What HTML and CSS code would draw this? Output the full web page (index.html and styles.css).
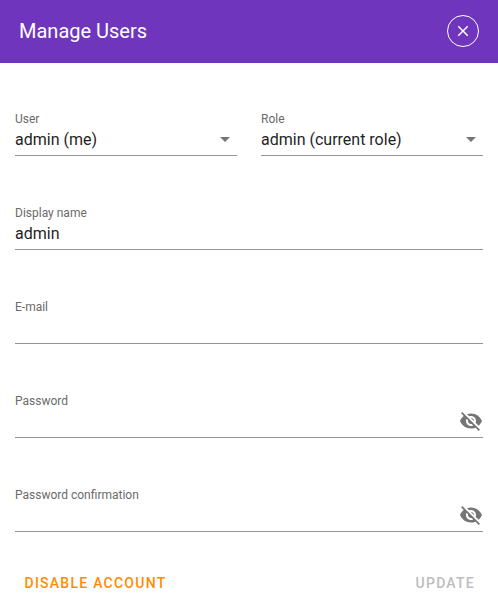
FILE: index.html
```html
<!DOCTYPE html>
<html lang="en">
<head>
<meta charset="utf-8">
<title>Manage Users</title>
<link rel="stylesheet" href="styles.css">
</head>
<body>
<main class="dialog">
  <header class="header">
    <h1 class="title">Manage Users</h1>
    <button class="close" aria-label="Close"><svg viewBox="0 0 24 24" width="18" height="18"><path d="M19 6.41L17.59 5 12 10.59 6.41 5 5 6.41 10.59 12 5 17.59 6.41 19 12 13.41 17.59 19 19 17.59 13.41 12z"/></svg></button>
  </header>
  <form class="form">
    <div class="row">
      <div class="field"><span class="label">User</span><div class="control"><span class="value">admin (me)</span><i class="arrow"></i></div></div>
      <div class="field"><span class="label">Role</span><div class="control"><span class="value">admin (current role)</span><i class="arrow"></i></div></div>
    </div>
    <div class="field"><span class="label">Display name</span><div class="control"><span class="value">admin</span></div></div>
    <div class="field"><span class="label">E-mail</span><div class="control"></div></div>
    <div class="field"><span class="label">Password</span><div class="control"><svg class="eye" viewBox="0 0 24 24"><path d="M12 7c2.76 0 5 2.24 5 5 0 .65-.13 1.26-.36 1.83l2.92 2.92c1.51-1.26 2.7-2.89 3.43-4.75-1.73-4.39-6-7.5-11-7.5-1.4 0-2.74.25-3.98.7l2.16 2.16C10.74 7.13 11.35 7 12 7zM2 4.27l2.28 2.28.46.46C3.08 8.3 1.78 10.02 1 12c1.73 4.39 6 7.5 11 7.5 1.55 0 3.03-.3 4.38-.84l.42.42L19.73 22 21 20.73 3.27 3 2 4.27zM7.53 9.8l1.55 1.55c-.05.21-.08.43-.08.65 0 1.66 1.34 3 3 3 .22 0 .44-.03.65-.08l1.55 1.55c-.67.33-1.41.53-2.2.53-2.76 0-5-2.24-5-5 0-.79.2-1.53.53-2.2zm4.31-.78l3.15 3.15.02-.16c0-1.66-1.34-3-3-3l-.17.01z"/></svg></div></div>
    <div class="field"><span class="label">Password confirmation</span><div class="control"><svg class="eye" viewBox="0 0 24 24"><path d="M12 7c2.76 0 5 2.24 5 5 0 .65-.13 1.26-.36 1.83l2.92 2.92c1.51-1.26 2.7-2.89 3.43-4.75-1.73-4.39-6-7.5-11-7.5-1.4 0-2.74.25-3.98.7l2.16 2.16C10.74 7.13 11.35 7 12 7zM2 4.27l2.28 2.28.46.46C3.08 8.3 1.78 10.02 1 12c1.73 4.39 6 7.5 11 7.5 1.55 0 3.03-.3 4.38-.84l.42.42L19.73 22 21 20.73 3.27 3 2 4.27zM7.53 9.8l1.55 1.55c-.05.21-.08.43-.08.65 0 1.66 1.34 3 3 3 .22 0 .44-.03.65-.08l1.55 1.55c-.67.33-1.41.53-2.2.53-2.76 0-5-2.24-5-5 0-.79.2-1.53.53-2.2zm4.31-.78l3.15 3.15.02-.16c0-1.66-1.34-3-3-3l-.17.01z"/></svg></div></div>
  </form>
  <footer class="actions">
    <button class="action disable">DISABLE ACCOUNT</button>
    <button class="action update" disabled>UPDATE</button>
  </footer>
</main>
</body>
</html>
```
FILE: styles.css
```css
* { box-sizing: border-box; }
body { margin: 0; background: #fff; font-family: Roboto, sans-serif; color: #1f1f1f; }
.dialog { height: 616px; display: flex; flex-direction: column; background: #fff; }
.header { height: 63px; padding: 0 19px 1px; display: flex; align-items: center; justify-content: space-between; background: #6f35bd; color: #fff; }
.title { margin: 0; font-size: 20px; line-height: 32px; font-weight: 400; }
.close { width: 32px; height: 32px; padding: 0; display: grid; place-items: center; border: 1px solid #fff; border-radius: 50%; background: none; }
.close svg { fill: #fff; }
.form { padding: 48px 15px 0; display: flex; flex-direction: column; gap: 49px; }
.row { display: grid; grid-template-columns: 1fr 1fr; gap: 24px; }
.field { height: 45px; display: flex; flex-direction: column; border-bottom: 1px solid #949494; }
.label { height: 16px; font-size: 12px; line-height: 16px; color: #6b6b6b; }
.control { height: 28px; display: flex; align-items: center; justify-content: space-between; }
.value { font-size: 16px; line-height: 24px; margin-top: -2px; }
.arrow { margin: 0 7px 4px 0; border: 5px solid transparent; border-top-color: #757575; border-bottom: 0; }
.eye { width: 24px; height: 24px; margin: 0 0 4px auto; fill: #757575; }
.actions { margin-top: 33px; padding: 0 23px 0 24.5px; display: flex; justify-content: space-between; }
.action { border: 0; padding: 0; background: none; font: 500 14px/36px Roboto, sans-serif; letter-spacing: 1.25px; }
.disable { color: #ff8c00; }
.update { color: #bdbdbd; }
```
